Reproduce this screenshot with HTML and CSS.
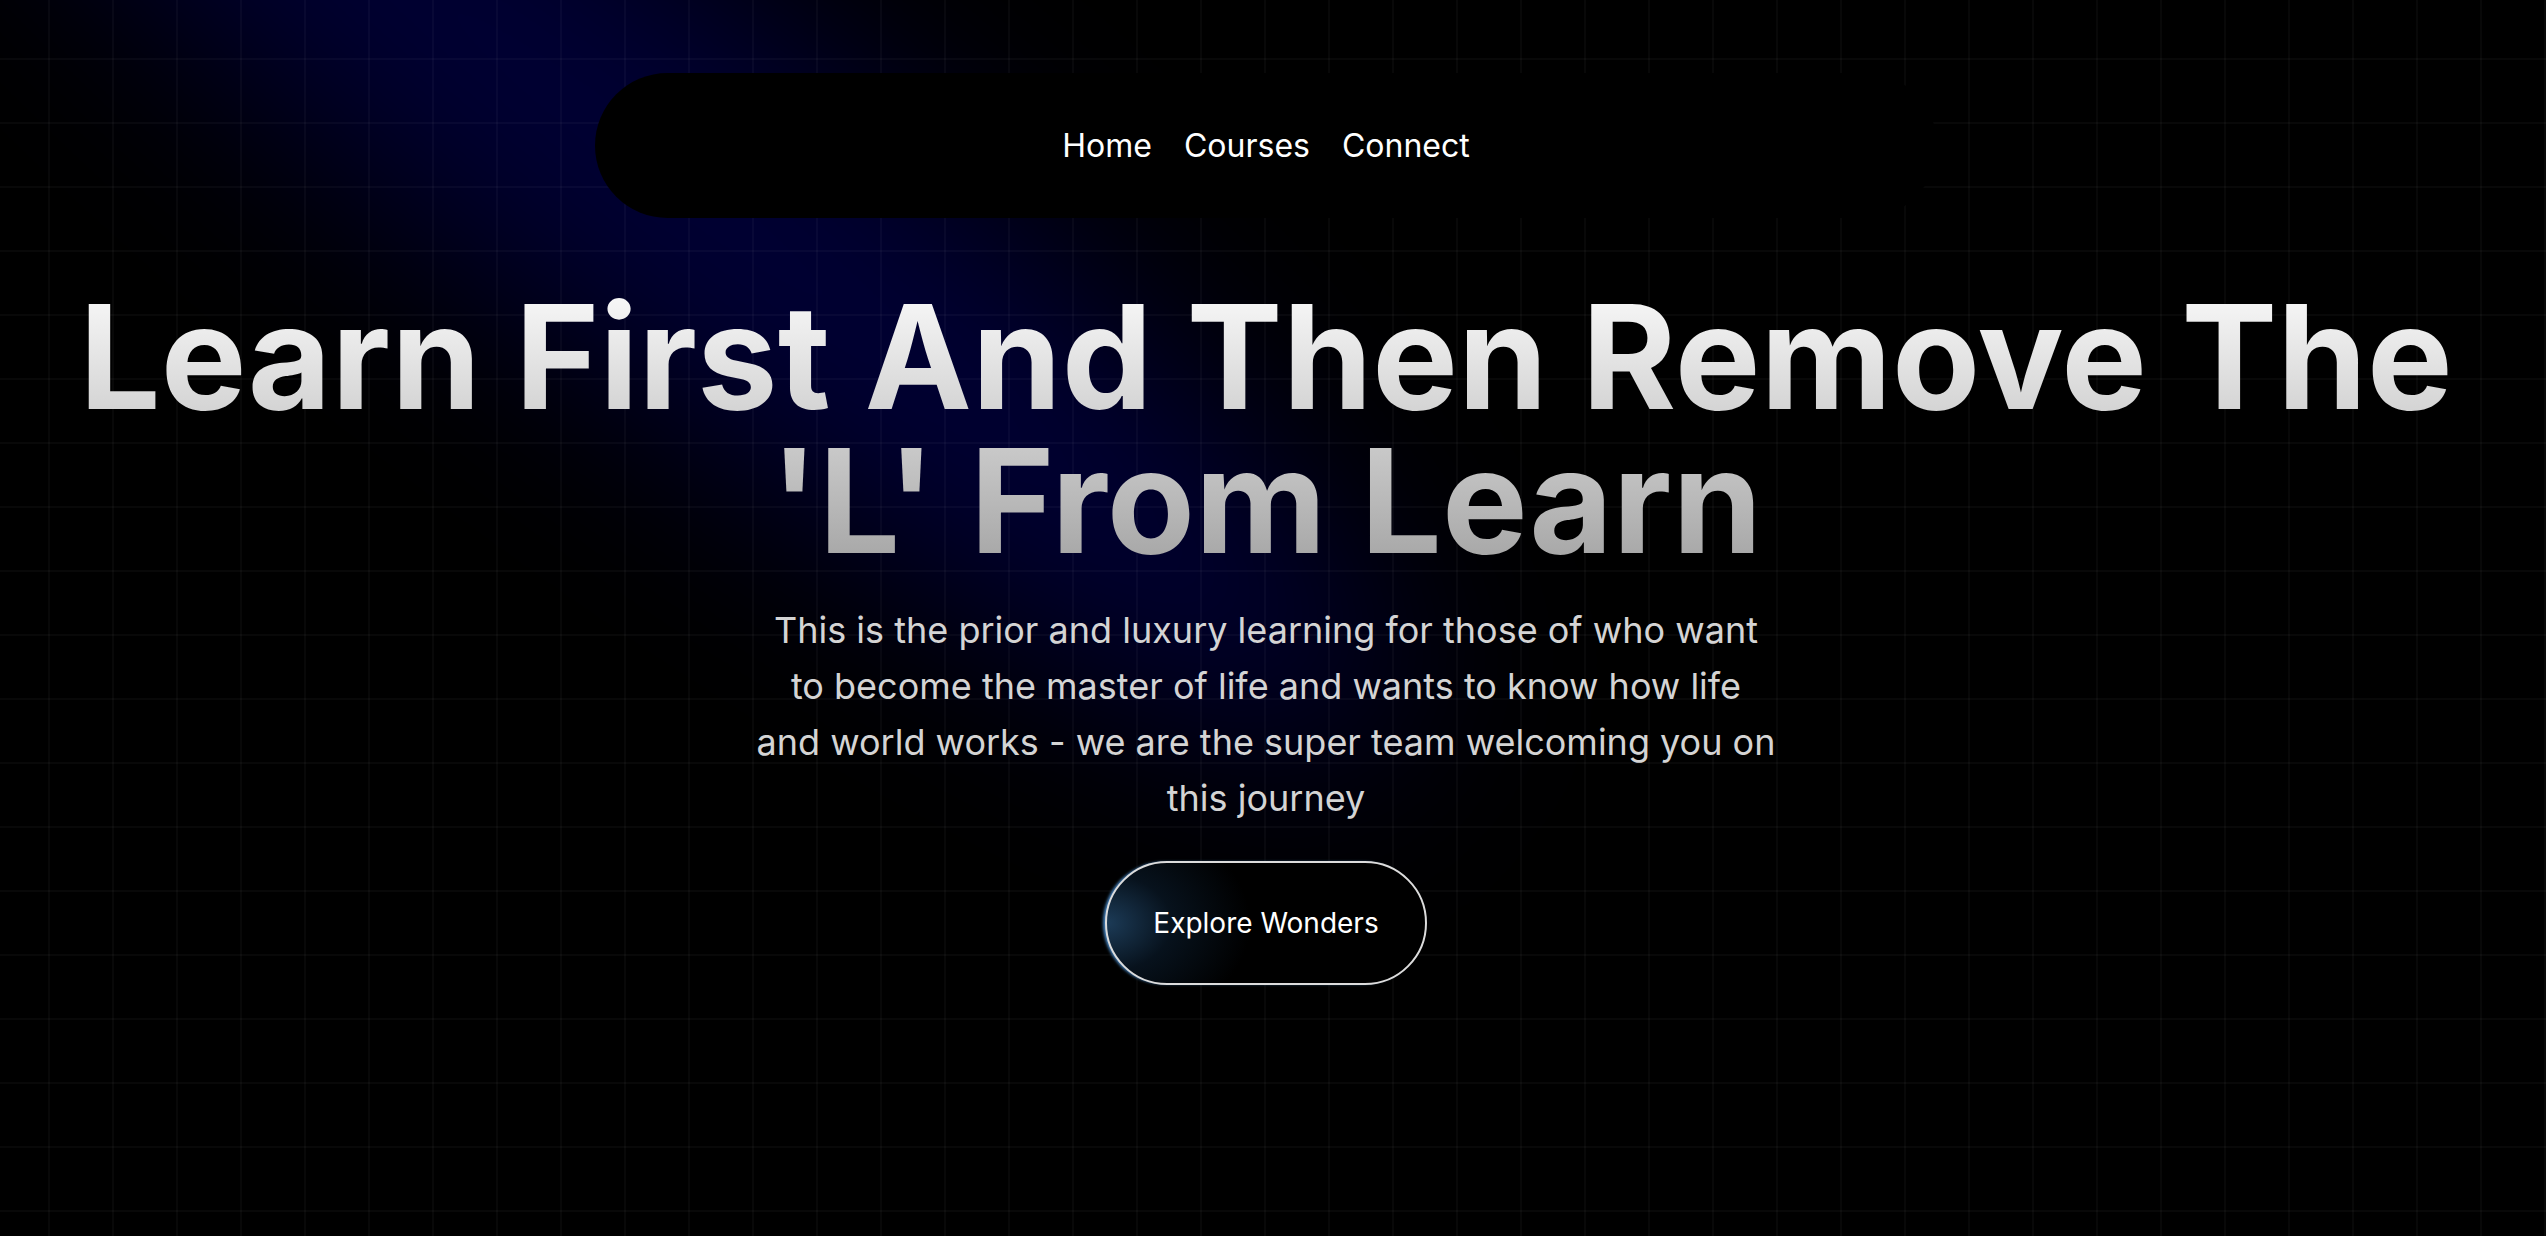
FILE: index.html
```
<!DOCTYPE html>
<html lang="en">
<head>
<meta charset="utf-8">
<title>Learn First</title>
<link rel="stylesheet" href="styles.css">
</head>
<body>
<div class="spotlight"></div>
<div class="grid"></div>
<div class="page">
  <header class="nav-wrap">
    <nav class="nav">
      <a href="#" class="nav-link">Home</a>
      <a href="#" class="nav-link">Courses</a>
      <a href="#" class="nav-link">Connect</a>
    </nav>
  </header>
  <main class="hero">
    <h1 class="title">Learn First And Then Remove The 'L' From Learn</h1>
    <p class="lead">This is the prior and luxury learning for those of who want to become the master of life and wants to know how life and world works - we are the super team welcoming you on this journey</p>
    <a href="#" class="cta">Explore Wonders</a>
  </main>
</div>
</body>
</html>
```
FILE: styles.css
```
html, body {
  margin: 0;
  height: 100%;
}
body {
  background: #000;
  overflow: hidden;
  position: relative;
  font-family: Inter, "Noto Sans", sans-serif;
}
.grid {
  position: absolute;
  inset: 0;
  background-image:
    linear-gradient(to right, rgba(255,255,255,0.03) 2px, transparent 2px),
    linear-gradient(to bottom, rgba(255,255,255,0.03) 2px, transparent 2px);
  background-size: 64px 64px;
  background-position: 48px 58px;
}
.spotlight {
  position: absolute;
  left: -310px;
  top: -35px;
  width: 1900px;
  height: 380px;
  border-radius: 50%;
  background: rgba(0, 0, 255, 0.2);
  filter: blur(100px);
  transform: rotate(37.5deg);
}
.page {
  position: relative;
  margin-right: 14px;
  display: flex;
  flex-direction: column;
  align-items: center;
}
.nav-wrap {
  padding-top: 73px;
}
.nav {
  width: 1342px;
  height: 145px;
  background: #000;
  border-radius: 9999px;
  display: flex;
  align-items: center;
  justify-content: center;
  gap: 32px;
}
.nav-link {
  color: #fff;
  font-size: 32px;
  text-decoration: none;
}
.hero {
  display: flex;
  flex-direction: column;
  align-items: center;
  margin-top: 67px;
}
.title {
  margin: 0;
  font-size: 144px;
  line-height: 1;
  font-weight: 700;
  text-align: center;
  background: linear-gradient(to bottom, #fafafa, #a3a3a3);
  -webkit-background-clip: text;
  background-clip: text;
  color: transparent;
}
.lead {
  margin: 29px 0 0;
  max-width: 1021px;
  font-size: 36px;
  line-height: 56px;
  color: #d4d4d4;
  text-align: center;
}
.cta {
  margin-top: 35px;
  padding: 40px 46px;
  border: 2px solid #dcdcdc;
  border-radius: 9999px;
  color: #fff;
  font-size: 28px;
  line-height: 40px;
  text-decoration: none;
  background: radial-gradient(ellipse 45% 90% at 0% 50%, #1c3b57 0%, rgba(12, 30, 48, 0.6) 45%, #000 100%);
  background-color: #000;
  box-shadow: -3px 0 3px -1px rgba(80, 150, 220, 0.85);
}
```
